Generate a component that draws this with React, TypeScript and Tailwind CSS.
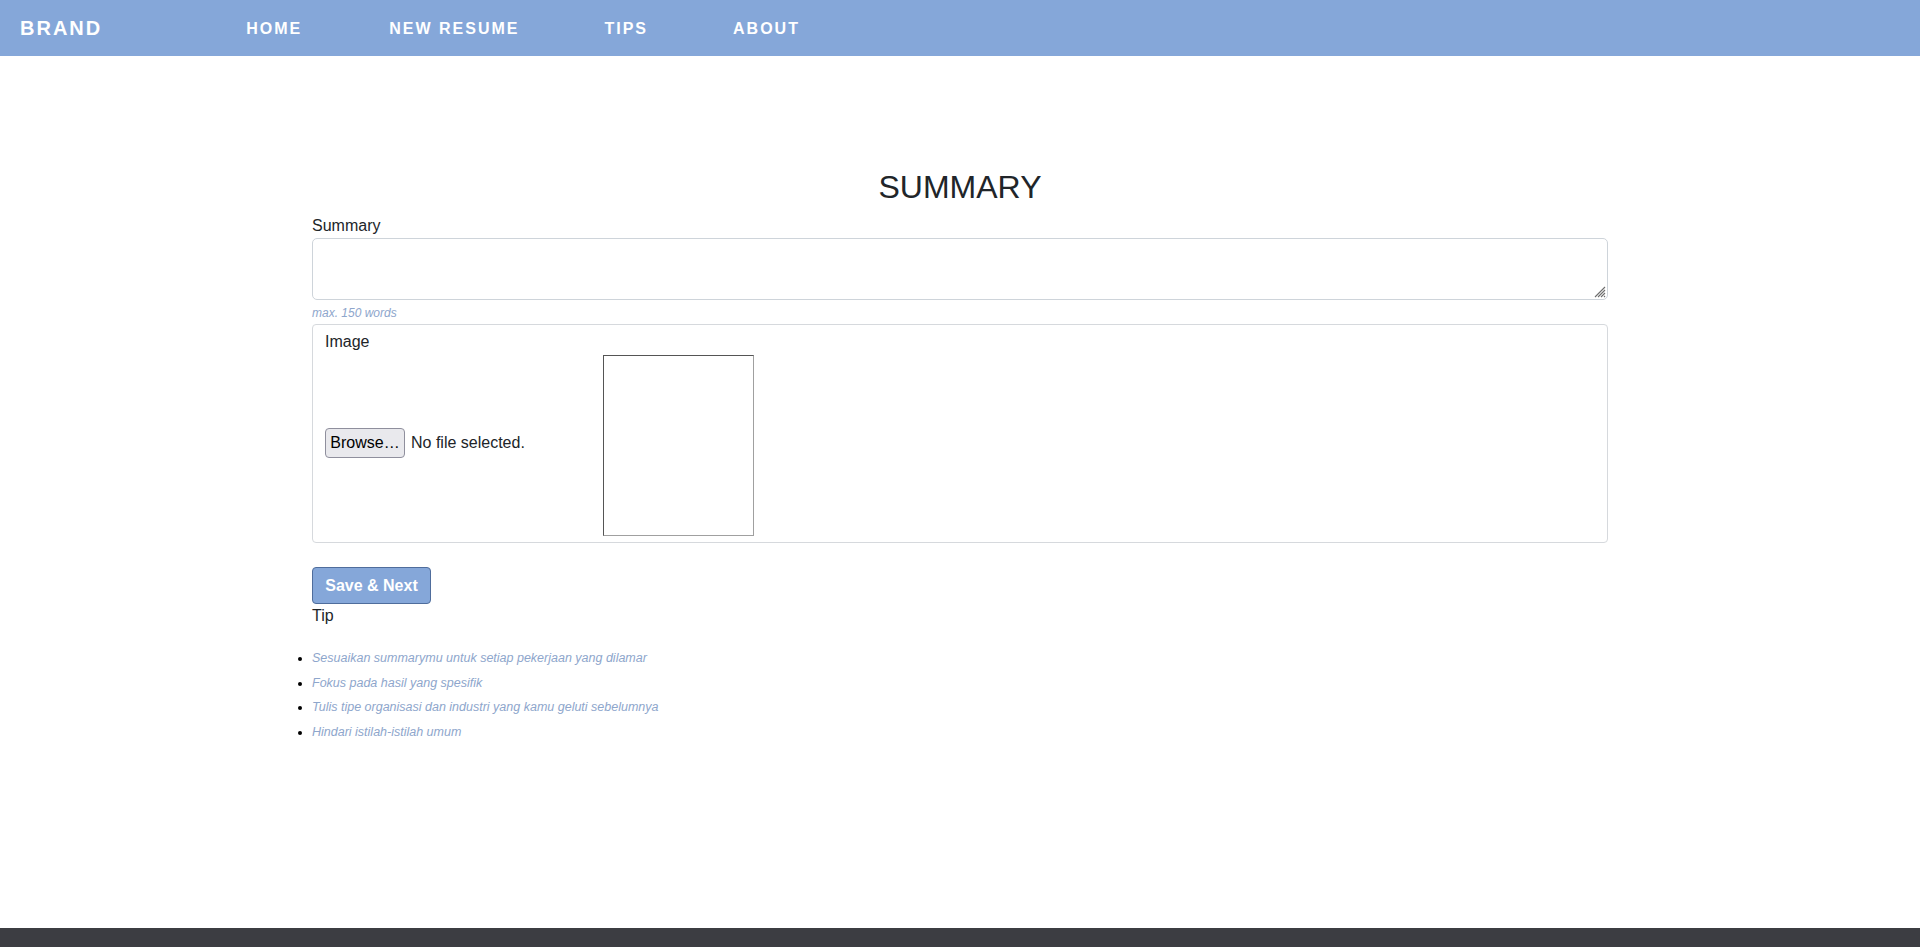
import React from 'react';

const NAV_LINKS = [
  { label: 'HOME', ml: 'ml-[144px]' },
  { label: 'NEW RESUME', ml: 'ml-[87px]' },
  { label: 'TIPS', ml: 'ml-[85px]' },
  { label: 'ABOUT', ml: 'ml-[85px]' },
];

const TIPS = [
  'Sesuaikan summarymu untuk setiap pekerjaan yang dilamar',
  'Fokus pada hasil yang spesifik',
  'Tulis tipe organisasi dan industri yang kamu geluti sebelumnya',
  'Hindari istilah-istilah umum',
];

const App: React.FC = () => {
  return (
    <div className="min-h-screen flex flex-col bg-white text-[#212529] font-['Liberation_Sans',Arial,sans-serif]">
      {/* Navbar */}
      <nav className="h-[56px] bg-[#85a7d9] flex items-center pl-[20px] pr-5 shrink-0">
        <a className="text-[20px] font-bold tracking-[2px] text-white leading-none">BRAND</a>
        {NAV_LINKS.map(link => (
          <a
            key={link.label}
            className={`${link.ml} text-[16px] font-bold tracking-[2px] text-white leading-none pt-[1px]`}
          >
            {link.label}
          </a>
        ))}
      </nav>

      <main className="flex-1">
        <div className="w-[1320px] mx-auto px-3 pt-[112px]">
          <h2 className="text-[32px] leading-[1.2] text-center mb-2">SUMMARY</h2>

          <label className="block text-[16px] leading-6">Summary</label>
          <div className="relative">
            <textarea className="block w-full h-[62px] border border-[#ced4da] rounded-[5px] resize-none outline-none px-3 py-1.5" />
            <svg className="absolute right-[2px] bottom-[2px] w-[12px] h-[12px]" viewBox="0 0 12 12">
              <path d="M1 11 L11 1 M4 11 L11 4 M7 11 L11 7 M10 11 L11 10" stroke="#6e6e6e" strokeWidth="1.1" fill="none" />
            </svg>
          </div>
          <p className="mt-1 text-[12px] leading-[18px] italic text-[#8ea6cc]">max. 150 words</p>

          <div className="mt-[2px] border border-[#d6d9dd] rounded-[4px] px-3 pt-[5px] pb-[6px]">
            <div className="text-[16px] leading-6">Image</div>
            <div className="flex items-center mt-[1px]">
              <div className="w-[278px] flex items-center pb-[6px]">
                <button className="h-[30px] w-[80px] bg-[#e9e9ed] border border-[#8f8f9d] rounded-[4px] text-[16px] leading-none text-black">
                  Browse…
                </button>
                <span className="ml-[6px] text-[16px]">No file selected.</span>
              </div>
              <div className="w-[151px] h-[181px] border border-[#555] border-r-[#a0a0a0] border-b-[#a0a0a0]" />
            </div>
          </div>

          <button className="mt-6 h-[37px] w-[119px] bg-[#85a7d9] border border-[#4f6d9c] rounded-[4px] text-white font-bold text-[16px]">
            Save &amp; Next
          </button>
          <div className="text-[16px] leading-6">Tip</div>

          <ul className="mt-[18px] list-disc list-outside pl-0 text-[12.5px] italic text-[#8ea6cc] marker:text-black">
            {TIPS.map(tip => (
              <li key={tip} className="leading-[24.5px]">{tip}</li>
            ))}
          </ul>
        </div>
      </main>

      <footer className="h-[19px] bg-[#3c3d42] shrink-0" />
    </div>
  );
};

export default App;
